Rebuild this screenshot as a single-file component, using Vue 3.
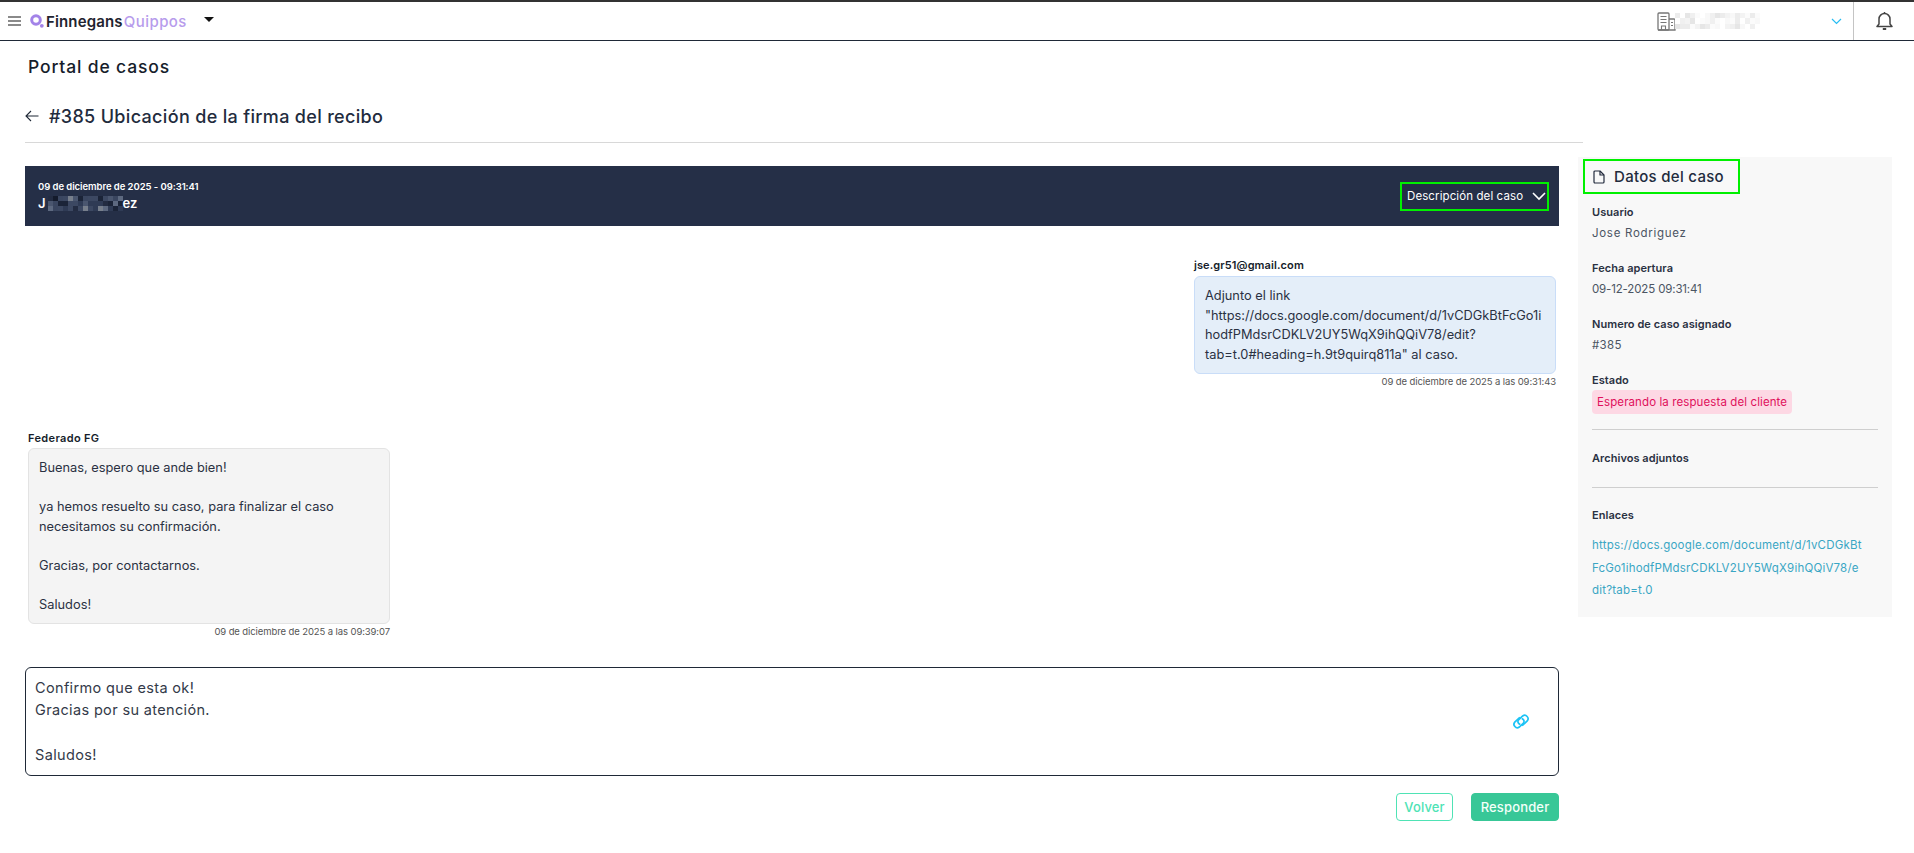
<script setup>
const hash = (i) => {
  const v = Math.sin(i * 12.9898) * 43758.5453
  return v - Math.floor(v)
}
const headerPalette = ['#ffffff','#f8f8f8','#f0f0f0','#fbfbfb','#e6e6e6','#ffffff','#f3f3f3','#ececec']
const headerCells = Array.from({ length: 17 * 3 }, (_, i) => headerPalette[Math.floor(hash(i + 1) * 8)])
const namePalette = ['#2f3b55','#3c4862','#1b2438','#5d6980','#3a4660','#232c42','#777f8c','#4a566f','#141b2c']
const nameCells = Array.from({ length: 15 * 3 }, (_, i) => namePalette[Math.floor(hash(i + 40) * 9)])
</script>

<template>
  <div class="app">
    <header class="topbar">
      <div class="brand">
        <span class="burger"><i></i><i></i><i></i></span>
        <svg class="logo-mark" width="14" height="14" viewBox="0 0 14 14">
          <circle cx="6" cy="6" r="4.3" fill="none" stroke="#a383e8" stroke-width="3" />
          <circle cx="11.8" cy="11.8" r="1.9" fill="#a383e8" />
        </svg>
        <span class="logo-a">Finnegans</span><span class="logo-b">Quippos</span>
        <span class="caret"></span>
      </div>
      <div class="tenant">
        <svg width="19" height="19" viewBox="0 0 19 19" fill="none" stroke="#777" stroke-width="1.3">
          <rect x="1" y="1" width="11" height="17" rx="1" />
          <path d="M12 7h5a1 1 0 0 1 1 1v10H1" />
          <path d="M3.5 4.5h6M3.5 7.5h6M3.5 10.5h6M4.5 18v-4h4v4M14 10.5h2M14 13.5h2" stroke-width="1.1" />
        </svg>
        <div class="mosaic mosaic-light">
          <span v-for="(c, i) in headerCells" :key="i" :style="{ background: c }"></span>
        </div>
        <svg class="tenant-chev" width="11" height="7" viewBox="0 0 11 7" fill="none" stroke="#27bdf2" stroke-width="1.2">
          <path d="M1 1l4.5 4.5L10 1" />
        </svg>
      </div>
      <div class="bell">
        <svg width="17" height="20" viewBox="0 0 17 20" fill="none" stroke="#444" stroke-width="1.5">
          <path d="M1 15.5h15l-2-2.5V8a5.5 5.5 0 0 0-11 0v5z" stroke-linejoin="round" />
          <path d="M8.5 1v1.5" />
          <path d="M6.8 18h3.4" stroke-width="2" />
        </svg>
      </div>
    </header>

    <h1 class="portal">Portal de casos</h1>

    <div class="case-head">
      <svg width="14" height="12" viewBox="0 0 14 12" fill="none" stroke="#1f2937" stroke-width="1.1">
        <path d="M13.5 6H1M6 1L1 6l5 5" />
      </svg>
      <h2>#385 Ubicación de la firma del recibo</h2>
    </div>

    <div class="columns">
      <main class="thread">
        <section class="banner">
          <div class="banner-who">
            <div class="banner-date">09 de diciembre de 2025 - 09:31:41</div>
            <div class="banner-name">
              <span>J</span>
              <div class="mosaic mosaic-dark">
                <span v-for="(c, i) in nameCells" :key="i" :style="{ background: c }"></span>
              </div>
              <span>ez</span>
            </div>
          </div>
          <button class="desc-toggle">
            <span>Descripción del caso</span>
            <svg width="14" height="9" viewBox="0 0 14 9" fill="none" stroke="#fff" stroke-width="1.6">
              <path d="M1 1l6 6 6-6" />
            </svg>
          </button>
        </section>

        <article class="msg msg-right">
          <div class="msg-name">jse.gr51@gmail.com</div>
          <div class="bubble bubble-blue">Adjunto el link<br />"https://docs.google.com/document/d/1vCDGkBtFcGo1i<br />hodfPMdsrCDKLV2UY5WqX9ihQQiV78/edit?<br />tab=t.0#heading=h.9t9quirq811a" al caso.</div>
          <div class="msg-time">09 de diciembre de 2025 a las 09:31:43</div>
        </article>

        <article class="msg msg-left">
          <div class="msg-name">Federado FG</div>
          <div class="bubble bubble-gray">Buenas, espero que ande bien!<br /><br />ya hemos resuelto su caso, para finalizar el caso necesitamos su confirmación.<br /><br />Gracias, por contactarnos.<br /><br />Saludos!</div>
          <div class="msg-time">09 de diciembre de 2025 a las 09:39:07</div>
        </article>

        <div class="reply">
          <div class="reply-text">Confirmo que esta ok!<br />Gracias por su atención.<br /><br />Saludos!</div>
          <svg class="clip" width="22" height="17" viewBox="0 0 19 15" fill="none" stroke="#1cc3f5" stroke-width="1.5">
            <path d="M8 4.2 4 8a3 3 0 0 0 4 4.4l3.6-3.4a2.4 2.4 0 0 0-.9-3.8" stroke-linecap="round" />
            <path d="M11 10.8 15 7a3 3 0 0 0-4-4.4L7.4 6a2.4 2.4 0 0 0 .9 3.8" stroke-linecap="round" />
          </svg>
        </div>

        <div class="actions">
          <button class="btn btn-ghost">Volver</button>
          <button class="btn btn-solid">Responder</button>
        </div>
      </main>

      <aside class="panel">
        <div class="panel-title">
          <svg width="12" height="14" viewBox="0 0 12 14" fill="none" stroke="#222b3d" stroke-width="1.2">
            <path d="M1 2a1 1 0 0 1 1-1h5l4 4v7a1 1 0 0 1-1 1H2a1 1 0 0 1-1-1z" stroke-linejoin="round" />
            <path d="M7 1v4h4" stroke-linejoin="round" />
          </svg>
          <span>Datos del caso</span>
        </div>
        <div class="field field-first">
          <div class="label">Usuario</div>
          <div class="value value-wide">Jose Rodriguez</div>
        </div>
        <div class="field">
          <div class="label">Fecha apertura</div>
          <div class="value value-tight">09-12-2025 09:31:41</div>
        </div>
        <div class="field">
          <div class="label">Numero de caso asignado</div>
          <div class="value">#385</div>
        </div>
        <div class="field field-state">
          <div class="label">Estado</div>
          <span class="badge">Esperando la respuesta del cliente</span>
        </div>
        <hr class="rule-first" />
        <div class="label label-solo">Archivos adjuntos</div>
        <hr />
        <div class="label label-links">Enlaces</div>
        <a class="link">https://docs.google.com/document/d/1vCDGkBt<br />FcGo1ihodfPMdsrCDKLV2UY5WqX9ihQQiV78/e<br />dit?tab=t.0</a>
      </aside>
    </div>
  </div>
</template>

<style>
html, body { background: #fff; }
</style>

<style scoped>
.app {
  font-family: "Inter", "Liberation Sans", sans-serif;
  color: #1f2937;
  min-height: 853px;
  overflow: hidden;
}
.topbar {
  height: 41px;
  box-sizing: border-box;
  border-top: 2px solid #333;
  border-bottom: 1px solid #1f2937;
  display: flex;
  align-items: center;
  background: #fff;
}
.brand { display: flex; align-items: center; padding-left: 8px; flex: 1; }
.burger { display: flex; flex-direction: column; gap: 2.5px; width: 13px; margin-right: 9px; }
.burger i { display: block; height: 1.5px; background: #8a8a8a; }
.logo-mark { margin-right: 2px; }
.logo-a { font-size: 15px; font-weight: 600; color: #1f2430; letter-spacing: 0.15px; margin-right: 1px; }
.logo-b { font-size: 15px; font-weight: 500; color: #b79cec; letter-spacing: 0.45px; }
.caret {
  width: 0; height: 0; margin-left: 17px; margin-top: -4px;
  border-left: 5px solid transparent; border-right: 5px solid transparent; border-top: 5px solid #111;
}
.tenant { display: flex; align-items: center; width: 196px; box-sizing: border-box; }
.mosaic { display: grid; flex: none; }
.mosaic span { display: block; }
.mosaic-light { grid-template-columns: repeat(17, 5px); grid-auto-rows: 5.3px; margin-left: -1px; }
.tenant-chev { margin-left: 71px; }
.bell {
  width: 61px; height: 100%; box-sizing: border-box; border-left: 1px solid #c4c4c4;
  display: flex; align-items: center; justify-content: center;
}
.portal {
  margin: 0; padding-left: 28px; height: 52px; line-height: 52px;
  font-size: 17.5px; font-weight: 450; color: #161d2b; letter-spacing: 0.85px;
}
.case-head {
  display: flex; align-items: center; gap: 10px; margin: 0 331px 0 25px; height: 50px;
  box-sizing: border-box; border-bottom: 1px solid #d8d8d8; padding-bottom: 3px;
}
.case-head h2 { margin: 0; font-size: 18px; font-weight: 450; color: #222b3d; letter-spacing: 0.33px; }
.columns {
  display: grid; grid-template-columns: 1534px 314px; column-gap: 19px;
  padding: 14px 0 0 25px; align-items: start;
}
.thread { padding-top: 9px; }
.banner {
  height: 60px; background: #252f47; color: #fff; display: flex; align-items: center;
  justify-content: space-between; padding: 0 10px 0 13px; box-sizing: border-box;
}
.banner-date { font-size: 9.5px; font-weight: 600; letter-spacing: -0.06px; line-height: 12px; }
.banner-name { display: flex; align-items: center; font-size: 13px; font-weight: 600; line-height: 16px; margin-top: 2px; }
.mosaic-dark { grid-template-columns: repeat(15, 5px); grid-auto-rows: 5px; margin-left: 2px; }
.desc-toggle {
  width: 149px; height: 29px; border: 2px solid #00f000; background: transparent; color: #fff;
  display: flex; align-items: center; justify-content: space-between; padding: 0 0 0 5px;
  font: 400 11.5px "Inter", sans-serif; letter-spacing: 0.1px; box-sizing: border-box;
}
.desc-toggle svg { margin-right: 1px; }
.msg { display: flex; flex-direction: column; width: 362px; }
.msg-right { margin: 31px 3px 0 auto; }
.msg-left { margin: 42px 0 0 3px; }
.msg-name { font-size: 11px; font-weight: 600; color: #161d2b; line-height: 16px; margin-bottom: 3px; letter-spacing: 0.1px; }
.msg-left .msg-name { margin-bottom: 2px; letter-spacing: 0.35px; }
.bubble {
  box-sizing: border-box; border-radius: 6px; padding: 9px 10px 9px 10px;
  font-size: 12.8px; line-height: 19.5px; color: #2a3142; letter-spacing: 0.01px;
}
.bubble-blue { background: #e4eef9; border: 1px solid #c9ddf8; }
.bubble-gray { background: #f4f4f4; border: 1px solid #e3e3e3; }
.msg-time { font-size: 9.5px; color: #555; text-align: right; line-height: 13px; margin-top: 1px; letter-spacing: -0.1px; }
.reply {
  margin-top: 29px; height: 109px; box-sizing: border-box; border: 1px solid #1f2937; border-radius: 6px;
  padding: 10px 9px; display: flex; align-items: center; justify-content: space-between;
}
.reply-text { font-size: 14.5px; line-height: 22.4px; color: #333a49; letter-spacing: 0.35px; }
.clip { margin-right: 17px; margin-top: -1px; }
.actions { display: flex; justify-content: flex-end; gap: 18px; margin-top: 17px; }
.btn {
  height: 28px; border-radius: 4px; font: 500 13px "Inter", sans-serif; box-sizing: border-box; padding: 0;
  letter-spacing: 0.15px;
}
.btn-ghost { width: 57px; background: #fff; border: 1px solid #4fe3b5; color: #4fe3b5; }
.btn-solid { width: 88px; background: #38c797; border: 1px solid #38c797; color: #f2fff9; }
.panel {
  background: #f8f8f8; height: 460px; box-sizing: border-box; padding: 2px 14px 0 14px;
  display: flex; flex-direction: column; align-items: flex-start;
}
.panel-title {
  margin-left: -9px; width: 157px; height: 35px; box-sizing: border-box; border: 2px solid #00f000;
  display: flex; align-items: center; gap: 9px; padding-left: 8px;
  font-size: 15px; font-weight: 450; color: #222b3d; letter-spacing: 0.3px;
}
.field { margin-top: 10px; height: 46px; }
.field-first { margin-top: 11px; }
.field-state { height: auto; }
.label { font-size: 11px; font-weight: 600; color: #2a3142; line-height: 14px; letter-spacing: 0.05px; }
.value { font-size: 11.5px; color: #4b5563; margin-top: 7px; line-height: 14px; letter-spacing: 0.3px; }
.value-wide { letter-spacing: 0.7px; }
.value-tight { letter-spacing: -0.15px; }
.badge {
  display: inline-block; margin-top: 3px; height: 24px; line-height: 24px; padding: 0 5px; border-radius: 4px;
  background: #fdd8e4; color: #e0105c; font-size: 11.5px; letter-spacing: 0.1px;
}
hr { width: 286px; border: 0; border-top: 1px solid #cfcfcf; margin: 0; }
.rule-first { margin-top: 15px; }
.label-solo { margin: 21px 0 22px; }
.label-links { margin: 20px 0 0; }
.link { font-size: 11.5px; line-height: 22.5px; color: #3aa6c4; margin-top: 12px; letter-spacing: 0.2px; white-space: nowrap; }
</style>
